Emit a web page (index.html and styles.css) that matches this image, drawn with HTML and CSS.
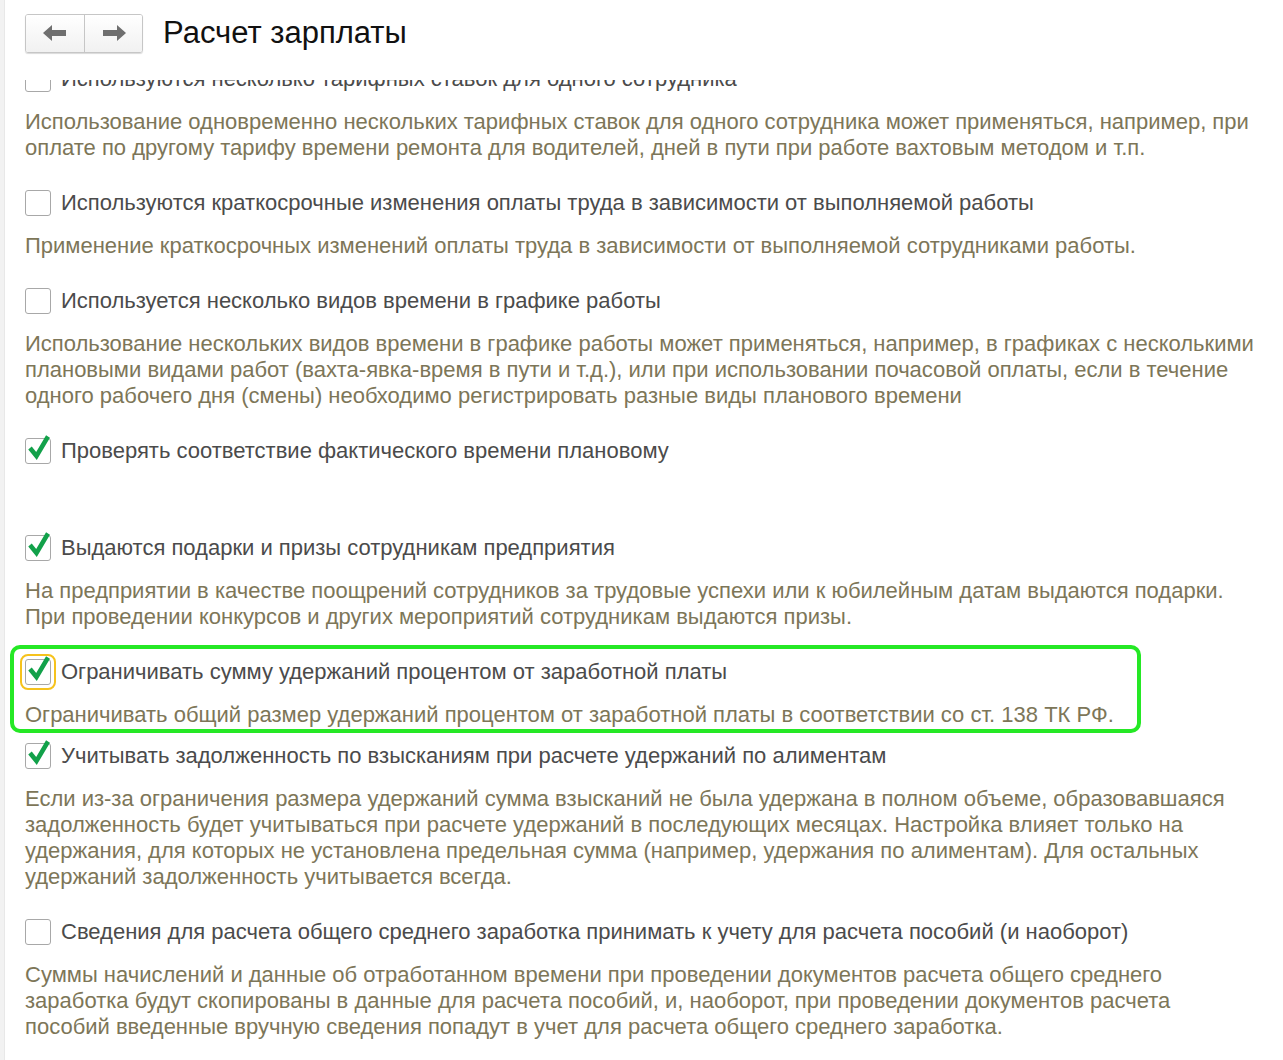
FILE: index.html
```
<!DOCTYPE html>
<html lang="ru">
<head>
	<meta charset="UTF-8">
	<title>Расчет зарплаты</title>
	<meta name="viewport" content="width=device-width, initial-scale=1.0">
	<link rel="stylesheet" href="styles.css">
</head>
<body>
	<div class="page">
		<div class="strip"></div>

		<div class="main">
			<div class="header">
				<div class="nav">
					<button class="nav--button">
						<svg width="24" height="16" viewBox="0 0 24 16"><path d="M0 8 L9 0 L9 5 L23 5 L23 11 L9 11 L9 16 Z" fill="#6f6f6f"/></svg>
					</button>
					<button class="nav--button">
						<svg width="24" height="16" viewBox="0 0 24 16"><path d="M24 8 L15 0 L15 5 L1 5 L1 11 L15 11 L15 16 Z" fill="#6f6f6f"/></svg>
					</button>
				</div>
				<h1 class="header--title">Расчет зарплаты</h1>
			</div>

			<div class="content">
				<div class="list">
					<div class="item">
						<label class="item--label"><span class="check"></span>Используются несколько тарифных ставок для одного сотрудника</label>
						<div class="item--text">Использование одновременно нескольких тарифных ставок для одного сотрудника может применяться, например, при оплате по другому тарифу времени ремонта для водителей, дней в пути при работе вахтовым методом и т.п.</div>
					</div>

					<div class="item">
						<label class="item--label"><span class="check"></span>Используются краткосрочные изменения оплаты труда в зависимости от выполняемой работы</label>
						<div class="item--text">Применение краткосрочных изменений оплаты труда в зависимости от выполняемой сотрудниками работы.</div>
					</div>

					<div class="item">
						<label class="item--label"><span class="check"></span>Используется несколько видов времени в графике работы</label>
						<div class="item--text">Использование нескольких видов времени в графике работы может применяться, например, в графиках с несколькими плановыми видами работ (вахта-явка-время в пути и т.д.), или при использовании почасовой оплаты, если в течение одного рабочего дня (смены) необходимо регистрировать разные виды планового времени</div>
					</div>

					<div class="item">
						<label class="item--label"><span class="check check--on"><svg width="26" height="26" viewBox="0 0 26 26"><path d="M5 10 L11.5 18 L23 -1.5" fill="none" stroke="#12a14a" stroke-width="4.5"/></svg></span>Проверять соответствие фактического времени плановому</label>
						<div class="item--text item--text-empty"></div>
					</div>

					<div class="item">
						<label class="item--label"><span class="check check--on"><svg width="26" height="26" viewBox="0 0 26 26"><path d="M5 10 L11.5 18 L23 -1.5" fill="none" stroke="#12a14a" stroke-width="4.5"/></svg></span>Выдаются подарки и призы сотрудникам предприятия</label>
						<div class="item--text">На предприятии в качестве поощрений сотрудников за трудовые успехи или к юбилейным датам выдаются подарки. При проведении конкурсов и других мероприятий сотрудникам выдаются призы.</div>
					</div>

					<div class="item item--marked">
						<label class="item--label"><span class="check check--on check--focus"><svg width="26" height="26" viewBox="0 0 26 26"><path d="M5 10 L11.5 18 L23 -1.5" fill="none" stroke="#12a14a" stroke-width="4.5"/></svg></span>Ограничивать сумму удержаний процентом от заработной платы</label>
						<div class="item--text">Ограничивать общий размер удержаний процентом от заработной платы в соответствии со ст. 138 ТК РФ.</div>
					</div>

					<div class="item">
						<label class="item--label"><span class="check check--on"><svg width="26" height="26" viewBox="0 0 26 26"><path d="M5 10 L11.5 18 L23 -1.5" fill="none" stroke="#12a14a" stroke-width="4.5"/></svg></span>Учитывать задолженность по взысканиям при расчете удержаний по алиментам</label>
						<div class="item--text">Если из-за ограничения размера удержаний сумма взысканий не была удержана в полном объеме, образовавшаяся задолженность будет учитываться при расчете удержаний в последующих месяцах. Настройка влияет только на удержания, для которых не установлена предельная сумма (например, удержания по алиментам). Для остальных удержаний задолженность учитывается всегда.</div>
					</div>

					<div class="item">
						<label class="item--label"><span class="check"></span>Сведения для расчета общего среднего заработка принимать к учету для расчета пособий (и наоборот)</label>
						<div class="item--text">Суммы начислений и данные об отработанном времени при проведении документов расчета общего среднего заработка будут скопированы в данные для расчета пособий, и, наоборот, при проведении документов расчета пособий введенные вручную сведения попадут в учет для расчета общего среднего заработка.</div>
					</div>
				</div>
			</div>
		</div>
	</div>
</body>
</html>
```

FILE: styles.css
```
body {
	margin: 0;
	background: #ffffff;
	font-family: "Liberation Sans", Arial, sans-serif;
}

.page {
	display: flex;
	height: 1060px;
	overflow: hidden;
}

.strip {
	width: 4px;
	flex-shrink: 0;
	background: #f2f2f2;
	border-right: 1px solid #e8e8e8;
}

.main {
	flex: 1;
	display: flex;
	flex-direction: column;
	min-width: 0;
}

.header {
	display: flex;
	align-items: center;
	gap: 20px;
	height: 66px;
	padding: 0 0 14px 20px;
	background: #ffffff;
	flex-shrink: 0;
}

.nav {
	display: flex;
	border: 1px solid #c6c6c6;
	border-radius: 3px;
	box-shadow: 0 1px 1px rgba(0, 0, 0, 0.15);
	overflow: hidden;
}

.nav--button {
	display: flex;
	justify-content: center;
	align-items: center;
	width: 58px;
	height: 37px;
	padding: 0;
	border: none;
	background: linear-gradient(#ffffff, #f1f1f1);
}

.nav--button + .nav--button {
	border-left: 1px solid #c6c6c6;
}

.header--title {
	margin: 0;
	font-size: 31px;
	font-weight: normal;
	color: #111111;
}

.content {
	flex: 1;
	overflow: hidden;
	padding: 0 25px 0 20px;
}

.list {
	margin-top: -16px;
}

.item {
	margin-bottom: 27px;
}

.item--label {
	display: flex;
	align-items: center;
	gap: 10px;
	height: 30px;
	font-size: 22px;
	color: #4b4b4b;
	white-space: nowrap;
}

.check {
	position: relative;
	width: 24px;
	height: 24px;
	flex-shrink: 0;
	border: 1px solid #a8a8a8;
	border-radius: 3px;
	background: #ffffff;
}

.check svg {
	position: absolute;
	left: -1px;
	top: -1px;
	overflow: visible;
}

.check--focus {
	outline: 2px solid #f6c21c;
	outline-offset: 3px;
	border-radius: 3px;
}

.item--text {
	margin-top: 15px;
	font-size: 22px;
	line-height: 26px;
	color: #7d7658;
}

.item--text-empty {
	height: 25px;
}

.item--marked {
	width: fit-content;
	margin: -12px 0 8px -15px;
	padding: 8px 23px 1px 11px;
	border: 4px solid #25e825;
	border-radius: 10px;
}
```
